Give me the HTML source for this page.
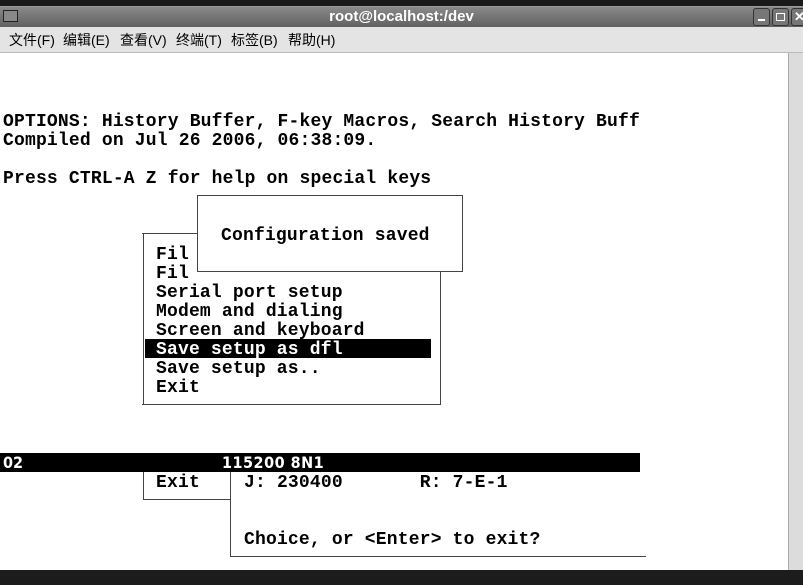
<!DOCTYPE html>
<html><head><meta charset="utf-8"><style>
body{margin:0;width:803px;height:585px;overflow:hidden;background:#fff;position:relative;font-family:"Liberation Mono",monospace}
.a{position:absolute}
.t{position:absolute;font-weight:bold;font-size:18px;line-height:19px;white-space:pre;color:#000;left:3px;letter-spacing:0.18px;margin-top:3px}
.h{position:absolute;height:1px;background:#444}
.v{position:absolute;width:1px;background:#444}
.m{position:absolute;top:30px;font:14px/20px 'Liberation Sans','Noto Sans CJK SC',sans-serif;color:#000;white-space:pre}
</style></head><body>
<div class="a" style="left:0;top:0;width:803px;height:6px;background:#1a1a1a"></div>
<div class="a" style="left:0;top:6px;width:803px;height:21px;background:linear-gradient(#8a8a8a,#5e5e5e);border-top:1px solid #999"></div>
<div class="a" style="left:3px;top:10px;width:13px;height:10px;border:1px solid #222;background:#888"></div>
<div class="a" style="left:0;top:6px;width:803px;text-align:center;color:#fff;font:bold 15px/21px 'Liberation Sans',sans-serif">root@localhost:/dev</div>
<div class="a" style="left:753px;top:8px;width:15px;height:16px;border:1px solid #333;border-radius:3px;background:#777"><div class="a" style="left:4px;top:10px;width:7px;height:2px;background:#fff"></div></div>
<div class="a" style="left:772px;top:8px;width:15px;height:16px;border:1px solid #333;border-radius:3px;background:#777"><div class="a" style="left:3px;top:4px;width:7px;height:6px;border:1px solid #fff"></div></div>
<div class="a" style="left:791px;top:8px;width:15px;height:16px;border:1px solid #333;border-radius:3px;background:#777;color:#fff;font:bold 13px/16px sans-serif;text-align:center">✕</div>
<div class="a" style="left:0;top:27px;width:803px;height:25px;background:#e4e4e4;border-bottom:1px solid #bbb"></div>
<div class="m" style="left:9px">文件(F)</div>
<div class="m" style="left:63px">编辑(E)</div>
<div class="m" style="left:120px">查看(V)</div>
<div class="m" style="left:176px">终端(T)</div>
<div class="m" style="left:231px">标签(B)</div>
<div class="m" style="left:288px">帮助(H)</div>
<div class="a" style="left:788px;top:53px;width:15px;height:517px;background:#dcdcdc;border-left:1px solid #aaa"></div>
<div class="a" style="left:0;top:570px;width:803px;height:15px;background:#1c1c1c"></div>

<div class="t" style="top:110px">OPTIONS: History Buffer, F-key Macros, Search History Buff</div>
<div class="t" style="top:129px">Compiled on Jul 26 2006, 06:38:09.</div>
<div class="t" style="top:167px">Press CTRL-A Z for help on special keys</div>

<div class="h" style="left:142px;top:233px;width:55px"></div>
<div class="v" style="left:143px;top:233px;height:172px"></div>
<div class="v" style="left:440px;top:271px;height:134px"></div>
<div class="h" style="left:142px;top:404px;width:299px"></div>
<div class="a" style="left:145px;top:339px;width:286px;height:19px;background:#000"></div>
<div class="t" style="left:156px;top:243px">Fil</div>
<div class="t" style="left:156px;top:262px">Fil</div>
<div class="t" style="left:156px;top:281px">Serial port setup</div>
<div class="t" style="left:156px;top:300px">Modem and dialing</div>
<div class="t" style="left:156px;top:319px">Screen and keyboard</div>
<div class="t" style="left:156px;top:338px;color:#fff">Save setup as dfl</div>
<div class="t" style="left:156px;top:357px">Save setup as..</div>
<div class="t" style="left:156px;top:376px">Exit</div>

<div class="a" style="left:197px;top:195px;width:264px;height:75px;background:#fff;border:1px solid #444"></div>
<div class="t" style="left:221px;top:224px">Configuration saved</div>

<div class="a" style="left:0;top:453px;width:640px;height:19px;background:#000"></div>
<div class="a" style="left:3px;top:453px;color:#fff;font:bold 16px/19px 'DejaVu Sans Condensed','Liberation Sans Narrow',sans-serif;white-space:pre">02</div>
<div class="a" style="left:222px;top:453px;color:#fff;font:bold 16px/19px 'DejaVu Sans Condensed','Liberation Sans Narrow',sans-serif;white-space:pre;letter-spacing:0.5px">115200 8N1</div>
<div class="v" style="left:143px;top:472px;height:28px"></div>
<div class="h" style="left:143px;top:499px;width:87px"></div>
<div class="v" style="left:230px;top:472px;height:85px"></div>
<div class="h" style="left:230px;top:556px;width:416px"></div>
<div class="t" style="left:156px;top:471px">Exit</div>
<div class="t" style="left:244px;top:471px">J: 230400       R: 7-E-1</div>
<div class="t" style="left:244px;top:528px">Choice, or &lt;Enter&gt; to exit?</div>
</body></html>
